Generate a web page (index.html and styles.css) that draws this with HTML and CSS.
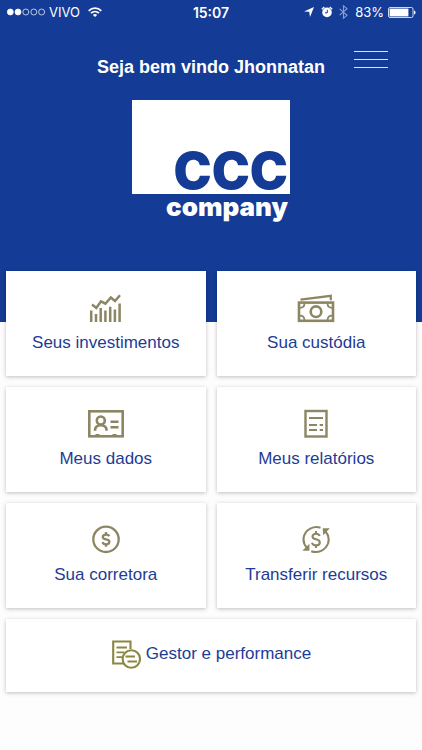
FILE: index.html
```html
<!DOCTYPE html>
<html lang="pt-BR">
<head>
    <meta charset="utf-8">
    <title>CCC company</title>
    <meta name="viewport" content="width=device-width, initial-scale=1">
    <link rel="stylesheet" href="styles.css">
</head>
<body>
    <header class="header">
        <div class="status-bar">
            <div class="status-left">
                <svg width="39" height="8" viewBox="0 0 39 8" fill="none" stroke="#fff" stroke-width="0.7">
                    <circle cx="4.3" cy="4" r="3" fill="#fff"/>
                    <circle cx="12" cy="4" r="3" fill="#fff"/>
                    <circle cx="19.8" cy="4" r="3"/>
                    <circle cx="27.8" cy="4" r="3"/>
                    <circle cx="35.6" cy="4" r="3"/>
                </svg>
                <span>VIVO</span>
                <svg class="wifi" width="14" height="10" viewBox="0 0 14 10" fill="none" stroke="#fff" stroke-width="1.8">
                    <path d="M0.7 3.8C4.3 0.2 9.7 0.2 13.3 3.8"/>
                    <path d="M3 6.2C5.3 4 8.7 4 11 6.2"/>
                    <path d="M7 10L4.9 7.9C6 6.8 8 6.8 9.1 7.9Z" fill="#fff" stroke="none"/>
                </svg>
            </div>
            <span class="time">15:07</span>
            <div class="status-right">
                <svg width="10" height="10" viewBox="0 0 10 10" fill="#fff">
                    <path d="M10 0L6 10L5.2 4.8L0 4.4Z"/>
                </svg>
                <svg class="alarm" width="12" height="12" viewBox="0 0 12 12">
                    <circle cx="6" cy="6.4" r="4.8" fill="#fff"/>
                    <path d="M0.8 3.2L3.3 1M11.2 3.2L8.7 1" stroke="#fff" stroke-width="1.3"/>
                    <path d="M6.3 3.8V6.8H4" fill="none" stroke="#143c96" stroke-width="1"/>
                </svg>
                <svg class="bluetooth" width="9" height="14" viewBox="0 0 9 14" fill="none" stroke="#8a9fcd" stroke-width="1.1">
                    <path d="M0.6 3.8L8 10.3L4.5 13.2V0.8L8 3.7L0.6 10.2"/>
                </svg>
                <span>83%</span>
                <svg width="28" height="11" viewBox="0 0 28 11">
                    <rect x="0.5" y="0.5" width="24.5" height="10" rx="1.5" fill="none" stroke="#fff" stroke-width="0.8"/>
                    <rect x="1.6" y="1.6" width="18.8" height="7.8" fill="#fff"/>
                    <path d="M26 3.5C28 4 28 7 26 7.5Z" fill="#fff"/>
                </svg>
            </div>
        </div>

        <div class="title-row">
            <h1>Seja bem vindo Jhonnatan</h1>
            <button class="menu-btn" type="button" aria-label="Menu">
                <span></span>
                <span></span>
                <span></span>
            </button>
        </div>

        <div class="logo">
            <div class="logo-box">CCC</div>
            <div class="logo-name">company</div>
        </div>
    </header>

    <main class="cards">
        <button class="card" type="button">
            <svg width="36" height="30" viewBox="0 0 36 30" fill="none" stroke="#8c8662" stroke-width="2.5">
                <path d="M3.2 29V17.5M8 29V21M12.7 29V15M17.4 29V17.5M22.2 29V13.8M26.9 29V16.5M31.6 29V10.5"/>
                <path d="M4 11.5L8.3 15L13 8.3L17.4 10.7L22.8 4.5L27 8L32 2.3"/>
            </svg>
            <span>Seus investimentos</span>
        </button>
        <button class="card" type="button">
            <svg width="38" height="30" viewBox="0 0 38 30" fill="none" stroke="#8c8662" stroke-width="2.6">
                <rect x="2" y="9.6" width="34" height="18.2"/>
                <circle cx="19" cy="18.7" r="5.3"/>
                <path d="M3 14.8C6 14.8 7.5 13.3 7.5 10.3M30.5 10.3C30.5 13.3 32 14.8 35 14.8M3 22.6C6 22.6 7.5 24.1 7.5 27.3M30.5 27.3C30.5 24.1 32 22.6 35 22.6" stroke-width="1.8"/>
                <path d="M3.5 6.6L33.8 2.8V7.2" stroke-width="2.2"/>
            </svg>
            <span>Sua custódia</span>
        </button>
        <button class="card" type="button">
            <svg width="36" height="30" viewBox="0 0 36 30" fill="none" stroke="#8c8662" stroke-width="2.6">
                <rect x="1.3" y="2.3" width="33.4" height="25"/>
                <circle cx="12.8" cy="11.5" r="4"/>
                <path d="M7 21.7C7 18.3 9 16.3 12.8 16.3C16.6 16.3 18.6 18.3 18.6 21.7"/>
                <path d="M22.5 12.7H30.5M22.5 18.2H30.5"/>
                <path d="M7.5 26H11.5M24.5 26H28.5" stroke-width="2"/>
            </svg>
            <span>Meus dados</span>
        </button>
        <button class="card" type="button">
            <svg width="24" height="30" viewBox="0 0 24 30" fill="none" stroke="#8c8662" stroke-width="2.4">
                <rect x="1.5" y="2" width="21" height="25.5"/>
                <path d="M5 9H19M5 16H13M15.7 16H19M5 21H13M15.7 21H19" stroke-width="2.2"/>
            </svg>
            <span>Meus relatórios</span>
        </button>
        <button class="card" type="button">
            <svg width="30" height="30" viewBox="0 1 30 30" fill="none" stroke="#8c8662" stroke-width="2.3">
                <circle cx="15" cy="15.3" r="12.7"/>
                <path d="M18.3 12.3C17.8 11.1 16.6 10.6 15 10.6C13 10.6 11.8 11.5 11.8 13C11.8 16.5 18.4 14.1 18.4 17.8C18.4 19.3 17.1 20.3 15 20.3C13.2 20.3 12 19.6 11.5 18.2M15 8.1V10.8M15 20.1V22.8"/>
            </svg>
            <span>Sua corretora</span>
        </button>
        <button class="card" type="button">
            <svg width="30" height="30" viewBox="0 1 30 30" fill="none" stroke="#8c8662" stroke-width="2.1">
                <path d="M19.5 3.7C12.5 1.5 5 5.5 3 12C1.8 16.5 2.8 20.5 6 24"/>
                <path d="M10.2 27.2C17 29.7 24.5 26.3 27 19.5C28.4 15.3 27.5 11 24.6 7.5"/>
                <path d="M1.3 26.7H8.4V19.8ZM21.7 4.3H28.8L22.2 11.2Z" fill="#8c8662" stroke="none"/>
                <path d="M18.7 12C18.1 10.3 16.8 9.7 15 9.7C12.8 9.7 11.5 10.8 11.5 12.4C11.5 16.6 18.8 14 18.8 18.4C18.8 20.2 17.3 21.3 15 21.3C13 21.3 11.5 20.4 11 18.7M15 7V9.7M15 21.3V24"/>
            </svg>
            <span>Transferir recursos</span>
        </button>
        <button class="card card-wide" type="button">
            <svg width="30" height="30" viewBox="0 0 30 30" fill="none" stroke="#8c8640" stroke-width="2.1">
                <path d="M19.5 10V2.5H2.2V24.5H13"/>
                <path d="M5.5 8.5H16M5.5 13.3H13M5.5 18.2H11" stroke-width="1.8"/>
                <circle cx="20.3" cy="20" r="8.7" fill="#fff"/>
                <path d="M14.5 17.5H24M16.5 22.5H26"/>
            </svg>
            <span>Gestor e performance</span>
        </button>
    </main>
</body>
</html>
```

FILE: styles.css
```css
* {
    box-sizing: border-box;
}
body {
    margin: 0;
    font-family: "Liberation Sans", Arial, sans-serif;
    background: #fdfdfd;
}
svg {
    display: block;
    flex-shrink: 0;
}
.header {
    height: 322px;
    background: #143c96;
    color: #fff;
}
.status-bar {
    display: grid;
    grid-template-columns: 1fr auto 1fr;
    align-items: center;
    height: 24px;
    padding: 0 6px;
    font-family: Inter, sans-serif;
    font-size: 13px;
}
.status-left,
.status-right {
    display: flex;
    align-items: center;
    gap: 4px;
}
.status-right {
    justify-content: flex-end;
}
.wifi {
    margin-left: 4px;
}
.alarm {
    margin: 0 2px 0 3px;
}
.bluetooth {
    margin-right: 3px;
}
.time {
    font-size: 14px;
    font-weight: 600;
}
.title-row {
    display: grid;
    grid-template-columns: 1fr auto 1fr;
    padding: 26px 34px 0;
}
.title-row h1 {
    grid-column: 2;
    margin: 6px 0 0;
    font-size: 18px;
    line-height: 22px;
}
.menu-btn {
    display: flex;
    flex-direction: column;
    gap: 7px;
    justify-self: end;
    align-self: start;
    width: 34px;
    padding: 1px 0 0;
    border: none;
    background: none;
    cursor: pointer;
}
.menu-btn span {
    width: 100%;
    height: 1px;
    background: #dde3f0;
}
.logo {
    width: 158px;
    margin: 22px auto 0;
    font-family: Inter, "Liberation Sans", sans-serif;
    font-weight: 900;
    text-align: right;
}
.logo-box {
    display: flex;
    align-items: flex-end;
    justify-content: flex-end;
    height: 94px;
    padding: 0 2px 4px 0;
    background: #fff;
    color: #143c96;
    font-size: 51px;
    line-height: 38px;
}
.logo-name {
    padding-right: 2px;
    font-size: 26px;
    line-height: 25px;
}
.cards {
    display: grid;
    grid-template-columns: 1fr 1fr;
    gap: 11px;
    margin-top: -51px;
    padding: 0 6px 24px;
}
.card {
    display: flex;
    flex-direction: column;
    align-items: center;
    justify-content: center;
    gap: 9px;
    height: 105px;
    padding: 0 0 1px;
    border: none;
    background: #fff;
    box-shadow: 0 1px 4px rgba(0,0,0,0.25);
    color: #1e3c96;
    font-family: inherit;
    font-size: 17px;
    line-height: 22px;
    cursor: pointer;
}
.card-wide {
    grid-column: span 2;
    flex-direction: row;
    gap: 5px;
    height: 73px;
    padding-bottom: 3px;
}
```
